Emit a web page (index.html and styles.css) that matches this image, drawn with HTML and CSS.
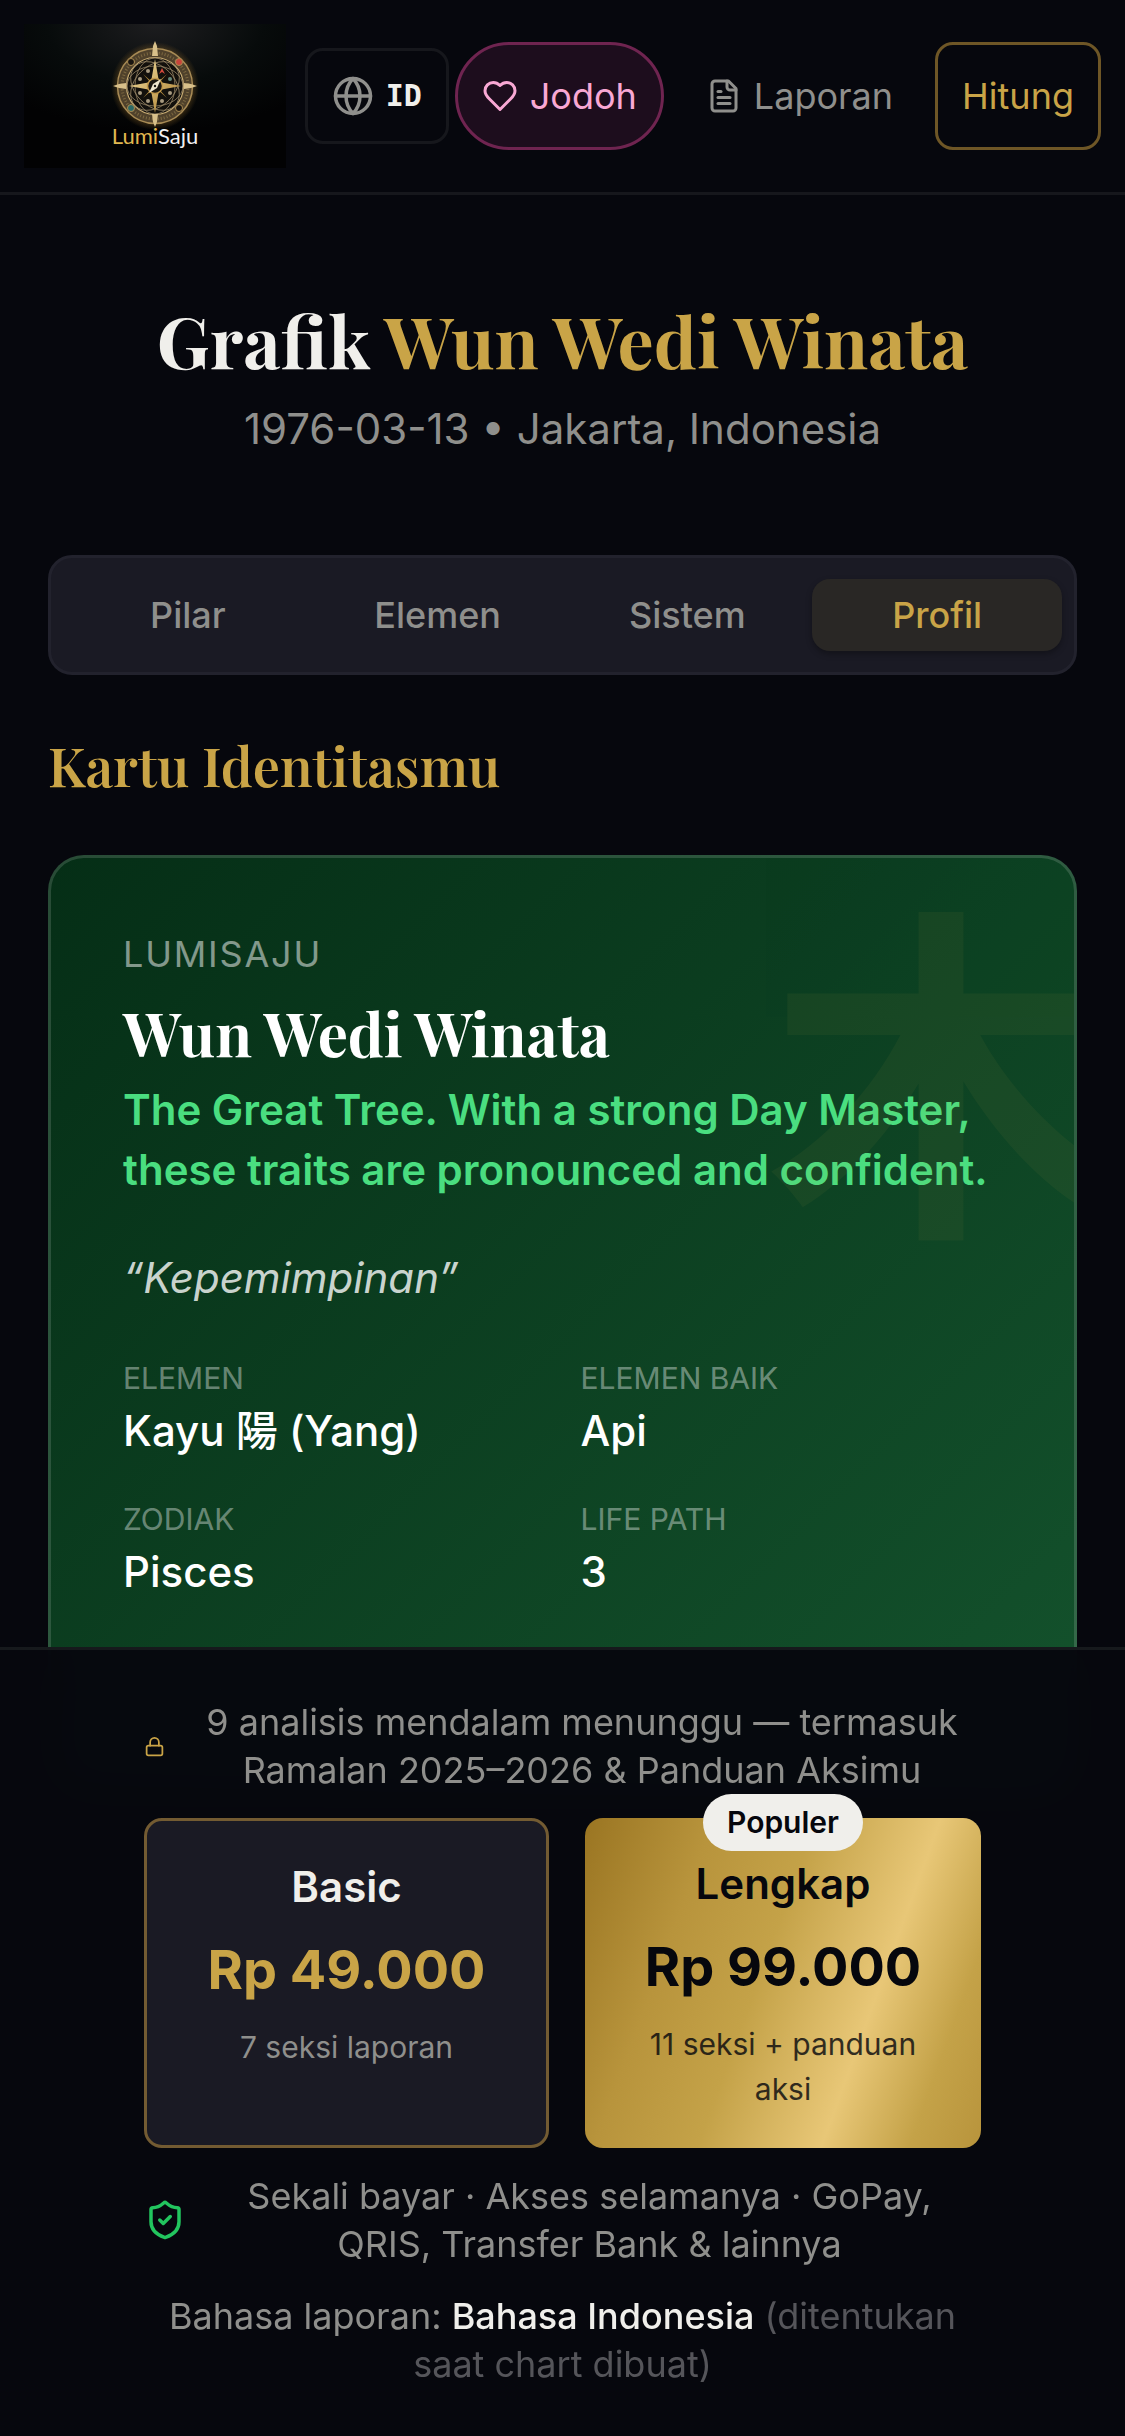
FILE: index.html
```
<!DOCTYPE html>
<html lang="id">
  <head>
    <meta charset="utf-8" />
    <meta name="viewport" content="width=device-width, initial-scale=1.0" />
    <title>LumiSaju</title>
    <link rel="stylesheet" href="styles.css" />
  </head>

  <body>
    <header class="topbar">
      <a href="#" class="logo" aria-label="LumiSaju">
        <svg viewBox="0 0 262 144" class="logo-art">
          <defs>
            <radialGradient id="glow" cx="50%" cy="0%" r="75%">
              <stop offset="0" stop-color="#1d1d1f" />
              <stop offset="0.55" stop-color="#070b0b" />
              <stop offset="1" stop-color="#020203" />
            </radialGradient>
            <radialGradient id="halo">
              <stop offset="0.7" stop-color="#8a6426" stop-opacity="0.7" />
              <stop offset="1" stop-color="#8a6426" stop-opacity="0" />
            </radialGradient>
            <linearGradient id="gold" x1="0" y1="0" x2="1" y2="1">
              <stop offset="0" stop-color="#f6e3a4" />
              <stop offset="1" stop-color="#a87a2c" />
            </linearGradient>
          </defs>
          <rect width="262" height="144" fill="url(#glow)" />
          <g transform="translate(131 62)">
            <circle r="44" fill="url(#halo)" />
            <circle r="38" fill="#12100c" />
            <circle r="33" fill="none" stroke="#4f412b" stroke-width="9" />
            <circle r="37.500" fill="none" stroke="#a88b55" stroke-width="1.500" />
            <circle r="33" fill="none" stroke="#7d6941" stroke-width="3" stroke-dasharray="1 2" />
            <circle r="28.500" fill="none" stroke="#c9ad74" stroke-width="1.200" />
            <!-- interlaced orbits -->
            <g fill="none" stroke="#988767" stroke-width="0.8">
              <ellipse rx="28" ry="20" />
              <ellipse rx="28" ry="20" transform="rotate(45)" />
              <ellipse rx="28" ry="20" transform="rotate(90)" />
              <ellipse rx="28" ry="20" transform="rotate(135)" />
            </g>
            <!-- zodiac marks -->
            <g fill="#a89a80">
              <circle cx="-7" cy="-15" r="2" />
              <path d="M7-18 10-12 7-14 4-12Z" fill="#d0493c" />
              <circle cx="15" cy="-7" r="2" fill="#63867a" />
              <circle cx="15" cy="7" r="2" />
              <circle cx="7" cy="15" r="2" />
              <circle cx="-7" cy="15" r="2" />
              <circle cx="-15" cy="7" r="2" />
              <circle cx="-15" cy="-7" r="2" />
            </g>
            <g fill="#191510" stroke="#a98a50" stroke-width="1">
              <circle cx="-24" cy="-24" r="3.500" />
              <circle cx="24" cy="-24" r="3.500" fill="#c7443a" />
              <circle cx="-24" cy="22" r="3.500" fill="#2c6a66" />
              <circle cx="24" cy="22" r="3.500" />
            </g>
            <path d="M0-45 2-40 3-30H-3L-2-40ZM0 41-2 36-3 28H3L2 36ZM-42 0-36-2-29-3V3L-36 2ZM42 0 36 2 29 3V-3L36-2Z" fill="#d8c08a" />
            <path d="M0-12 3-4 12-12 4-3 12 0 4 3 12 12 3 4 0 12-3 4-12 12-4 3-12 0-4-3-12-12-3-4Z" fill="#b58d3f" />
            <path d="M0-27 4-4 26 0 4 4 0 27-4 4-26 0-4-4Z" fill="url(#gold)" />
            <circle r="7.500" fill="#1b1712" stroke="#c39a4c" stroke-width="1.500" />
            <path d="M6-7 2 2-6 7-2-2Z" fill="#efe6cf" />
            <circle r="1.200" fill="#1b1712" />
          </g>
          <text x="131" y="120" text-anchor="middle" class="logo-name"><tspan fill="#e0b850">Lumi</tspan><tspan fill="#f0f0f2">Saju</tspan></text>
        </svg>
      </a>

      <nav class="menu">
        <button type="button" class="btn btn-lang">
          <svg class="icon icon-lg" viewBox="0 0 24 24">
            <circle cx="12" cy="12" r="10" />
            <path d="M12 2a14.5 14.5 0 0 0 0 20 14.5 14.5 0 0 0 0-20" />
            <path d="M2 12h20" />
          </svg>
          <span>ID</span>
        </button>
        <a href="#" class="btn btn-jodoh">
          <svg class="icon" viewBox="0 0 24 24">
            <path d="M19 14c1.49-1.46 3-3.21 3-5.5A5.5 5.5 0 0 0 16.5 3c-1.76 0-3 .5-4.5 2-1.5-1.5-2.74-2-4.5-2A5.5 5.5 0 0 0 2 8.5c0 2.3 1.5 4.050 3 5.5l7 7Z" />
          </svg>
          Jodoh
        </a>
        <a href="#" class="btn btn-laporan">
          <svg class="icon" viewBox="0 0 24 24">
            <path d="M15 2H6a2 2 0 0 0-2 2v16a2 2 0 0 0 2 2h12a2 2 0 0 0 2-2V7Z" />
            <path d="M14 2v4a2 2 0 0 0 2 2h4" />
            <path d="M10 9H8" />
            <path d="M16 13H8" />
            <path d="M16 17H8" />
          </svg>
          Laporan
        </a>
        <a href="#" class="btn btn-hitung">Hitung</a>
      </nav>
    </header>

    <main>
      <h1>Grafik <span>Wun Wedi Winata</span></h1>
      <p class="birth">1976-03-13 • Jakarta, Indonesia</p>

      <div class="tabs" role="tablist">
        <button type="button" role="tab">Pilar</button>
        <button type="button" role="tab">Elemen</button>
        <button type="button" role="tab">Sistem</button>
        <button type="button" role="tab" aria-selected="true" class="active">Profil</button>
      </div>

      <h2>Kartu Identitasmu</h2>

      <article class="card">
        <div class="watermark" aria-hidden="true">木</div>
        <p class="brand">LUMISAJU</p>
        <h3>Wun Wedi Winata</h3>
        <p class="trait">The Great Tree. With a strong Day Master, these traits are pronounced and confident.</p>
        <p class="quote">“Kepemimpinan”</p>
        <dl class="facts">
          <div>
            <dt>ELEMEN</dt>
            <dd>Kayu 陽 (Yang)</dd>
          </div>
          <div>
            <dt>ELEMEN BAIK</dt>
            <dd>Api</dd>
          </div>
          <div>
            <dt>ZODIAK</dt>
            <dd>Pisces</dd>
          </div>
          <div>
            <dt>LIFE PATH</dt>
            <dd>3</dd>
          </div>
        </dl>
      </article>
    </main>

    <aside class="paywall">
      <div class="note note-lock">
        <svg class="icon icon-lock" viewBox="0 0 24 24">
          <rect x="3" y="11" width="18" height="11" rx="2" />
          <path d="M7 11V7a5 5 0 0 1 10 0v4" />
        </svg>
        <p>9 analisis mendalam menunggu — termasuk Ramalan 2025–2026 &amp; Panduan Aksimu</p>
      </div>

      <div class="plans">
        <button type="button" class="plan plan-basic">
          <span class="plan-name">Basic</span>
          <span class="plan-price">Rp 49.000</span>
          <span class="plan-info">7 seksi laporan</span>
        </button>
        <button type="button" class="plan plan-full">
          <span class="badge">Populer</span>
          <span class="plan-name">Lengkap</span>
          <span class="plan-price">Rp 99.000</span>
          <span class="plan-info">11 seksi + panduan aksi</span>
        </button>
      </div>

      <div class="note note-safe">
        <svg class="icon icon-lg icon-shield" viewBox="0 0 24 24">
          <path d="M20 13c0 5-3.5 7.5-7.66 8.95a1 1 0 0 1-.67-.01C7.5 20.5 4 18 4 13V6a1 1 0 0 1 1-1c2 0 4.5-1.2 6.24-2.72a1.17 1.17 0 0 1 1.52 0C14.51 3.81 17 5 19 5a1 1 0 0 1 1 1z" />
          <path d="m9 12 2 2 4-4" />
        </svg>
        <p>Sekali bayar · Akses selamanya · GoPay, QRIS, Transfer Bank &amp; lainnya</p>
      </div>

      <p class="language">Bahasa laporan: <strong>Bahasa Indonesia</strong> <span>(ditentukan saat chart dibuat)</span></p>
    </aside>
  </body>
</html>
```
FILE: styles.css
```
* {
  box-sizing: border-box;
}

body {
  margin: 0;
  min-height: 100vh;
  background-color: #06070d;
  color: #f0efeb;
  font-family: Inter, "Noto Sans CJK JP", sans-serif;
  font-size: 36px;
  line-height: 48px;
}

h1,
h2,
h3,
p,
dl,
dd {
  margin: 0;
}

h1,
h2,
h3 {
  font-family: "Playfair Display", "Liberation Serif", serif;
  font-weight: 700;
}

button {
  font: inherit;
  color: inherit;
  cursor: pointer;
}

a {
  text-decoration: none;
}

.icon {
  width: 36px;
  height: 36px;
  flex: none;
  fill: none;
  stroke: currentColor;
  stroke-width: 2;
  stroke-linecap: round;
  stroke-linejoin: round;
}

.icon-lg {
  width: 42px;
  height: 42px;
}

/* top bar */
.topbar {
  display: flex;
  align-items: center;
  justify-content: space-between;
  padding: 24px;
  border-bottom: 3px solid #16171c;
}

.logo-art {
  display: block;
  width: 262px;
  height: 144px;
}

.logo-name {
  font-family: Lato, sans-serif;
  font-size: 22px;
}

.menu {
  display: flex;
  align-items: center;
  gap: 6px;
}

.btn {
  display: flex;
  align-items: center;
  gap: 12px;
  padding: 27px 24px;
  border: 3px solid transparent;
  border-radius: 18px;
}

.btn-lang {
  padding: 21px 24px;
  border-color: #16171c;
  background: none;
}

.btn-lang .icon {
  color: #8f8f8c;
}

.btn-lang span {
  font-family: "DejaVu Sans Mono", monospace;
  font-size: 30px;
  font-weight: 700;
}

.btn-jodoh {
  border-color: #6f2450;
  border-radius: 54px;
  background-color: #1d0d1d;
  color: #f9a8d4;
}

.btn-laporan {
  padding: 27px 33px;
  color: #8f8f8c;
}

.btn-hitung {
  border-color: #6e5626;
  color: #c9a447;
}

/* page */
main {
  padding: 99px 48px 0;
}

h1 {
  font-size: 72px;
  line-height: 90px;
  text-align: center;
}

h1 span,
h2 {
  color: #c9a447;
}

.birth {
  margin-top: 15px;
  color: #8f8f8c;
  font-size: 42px;
  line-height: 60px;
  text-align: center;
}

.tabs {
  display: grid;
  grid-template-columns: repeat(4, 1fr);
  margin-top: 96px;
  padding: 21px 12px;
  border: 3px solid #22222d;
  border-radius: 24px;
  background-color: #1a1a24;
}

.tabs button {
  padding: 12px;
  border: none;
  border-radius: 18px;
  background: none;
  color: #8f8f8c;
  font-weight: 500;
}

.tabs .active {
  background-color: #292725;
  color: #c9a447;
  box-shadow: 0 3px 6px #0000004d;
}

h2 {
  margin: 48px 0;
  font-size: 54px;
  font-weight: 600;
  line-height: 84px;
}

/* identity card */
.card {
  position: relative;
  overflow: hidden;
  padding: 72px 72px 192px;
  border: 3px solid #ffffff24;
  border-radius: 36px;
  background: linear-gradient(135deg, #052e16, #14532d) border-box;
  color: #fff;
}

.watermark {
  position: absolute;
  top: 24px;
  right: -42px;
  color: #c9a447;
  font-family: "Noto Sans CJK JP", sans-serif;
  font-size: 350px;
  font-weight: 700;
  line-height: 350px;
  opacity: 0.06;
}

.brand {
  color: #ffffff80;
  letter-spacing: 0.05em;
}

h3 {
  margin: 18px 0 12px;
  font-size: 60px;
  line-height: 72px;
}

.trait,
.quote {
  font-size: 42px;
  line-height: 60px;
}

.trait {
  color: #4ade80;
  font-weight: 600;
}

.quote {
  margin: 48px 0;
  color: #ffffffcc;
  font-style: italic;
}

.facts {
  display: grid;
  grid-template-columns: 1fr 1fr;
  gap: 36px;
}

.facts dt {
  color: #ffffff66;
  font-size: 30px;
  line-height: 45px;
}

.facts dd {
  font-size: 42px;
  font-weight: 500;
  line-height: 60px;
}

/* sticky offer at the bottom of the screen */
.paywall {
  position: fixed;
  right: 0;
  bottom: 0;
  left: 0;
  display: flex;
  flex-direction: column;
  gap: 24px;
  padding: 48px 144px;
  border-top: 3px solid #16191c;
  background-color: #06070df7;
  backdrop-filter: blur(24px);
  color: #8f8f8c;
  text-align: center;
}

.note {
  display: flex;
  align-items: center;
  gap: 12px;
}

.note p {
  flex: 1;
}

.note-lock {
  gap: 18px;
}

.icon-lock {
  width: 21px;
  height: 21px;
  color: #c9a447;
}

.icon-shield {
  color: #22c55e;
}

.plans {
  display: grid;
  grid-template-columns: 45fr 44fr;
  gap: 36px;
}

.plan {
  position: relative;
  display: flex;
  flex-direction: column;
  align-items: center;
  padding: 36px;
  border: none;
  border-radius: 18px;
}

.plan-basic {
  border: 3px solid #735b32;
  background-color: #1a1a24;
}

.plan-full {
  background: linear-gradient(110deg, #9a7522, #b8943c 25%, #c4a248 45%, #e8c777 69%, #c4a248 86%, #b8943c);
  color: #06070d;
}

.plan-name {
  font-size: 42px;
  font-weight: 600;
  line-height: 60px;
}

.plan-price {
  margin: 12px 0 15px;
  font-size: 54px;
  font-weight: 700;
  line-height: 81px;
}

.plan-info {
  font-size: 30px;
  line-height: 45px;
}

.plan-basic .plan-name {
  color: #f0efeb;
}

.plan-basic .plan-price {
  color: #c9a447;
}

.plan-basic .plan-info {
  color: #8f8f8c;
}

.plan-full .plan-info {
  opacity: 0.8;
}

.badge {
  position: absolute;
  top: -24px;
  left: 50%;
  transform: translateX(-50%);
  padding: 6px 24px;
  border-radius: 30px;
  background-color: #f0efeb;
  font-size: 30px;
  font-weight: 600;
  line-height: 45px;
}

.language strong {
  color: #f0efeb;
  font-weight: 500;
}

.language span {
  color: #55555a;
}
```
